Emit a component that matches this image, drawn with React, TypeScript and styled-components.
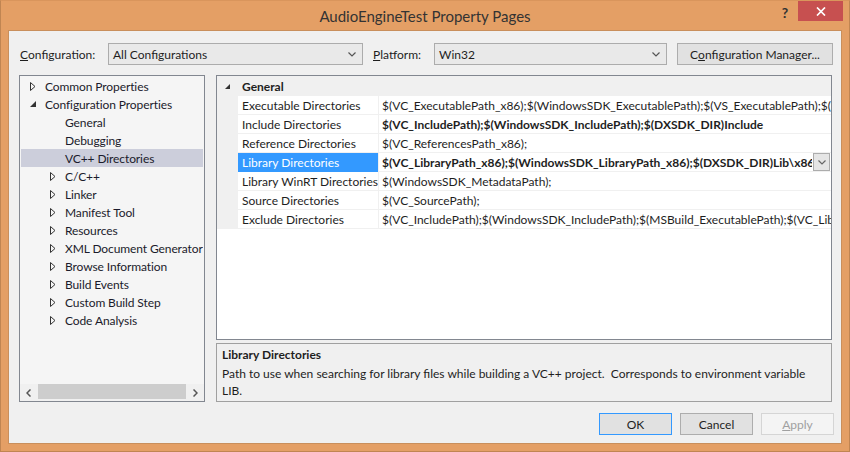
import React from "react";
import styled, { createGlobalStyle } from "styled-components";

const FONT = `"Segoe UI", Lato, "Open Sans", sans-serif`;

const Global = createGlobalStyle`
  html, body { margin: 0; padding: 0; background: #ffffff; }
  body { font-family: ${FONT}; font-size: 12px; color: #1e1e1e; }
  * { box-sizing: border-box; }
`;

const Frame = styled.div`
  width: 850px;
  height: 452px;
  background: #e49f65;
  border: 1px solid #c08552;
  border-top-color: #d9955c;
  display: flex;
  flex-direction: column;
  padding: 0 7px 7px 7px;
  overflow: hidden;
`;

const TitleBar = styled.div`
  height: 30px;
  display: grid;
  grid-template-columns: 1fr auto 1fr;
  align-items: center;
`;

const Title = styled.div`
  font-size: 15px;
  color: #333333;
  white-space: nowrap;
`;

const Caption = styled.div`
  justify-self: end;
  align-self: start;
  display: flex;
  margin-right: -1px;
`;

const HelpButton = styled.div`
  width: 26px;
  height: 23px;
  display: flex;
  align-items: center;
  justify-content: center;
  font-weight: bold;
  font-size: 14px;
  color: #333;
`;

const CloseButton = styled.div`
  width: 45px;
  height: 20px;
  background: #c75050;
  display: flex;
  align-items: center;
  justify-content: center;
`;

const Client = styled.div`
  flex: 1;
  min-width: 0;
  background: #f0f0f0;
  border: 1px solid #c98f5c;
  padding: 12px 7px 8px 10px;
  display: flex;
  flex-direction: column;
`;

const TopRow = styled.div`
  height: 22px;
  display: flex;
  align-items: stretch;
  margin-bottom: 10px;
`;

const FieldLabel = styled.div<{ $w: number; $ml?: number }>`
  width: ${(p) => p.$w}px;
  margin-left: ${(p) => p.$ml ?? 0}px;
  display: flex;
  align-items: center;
  white-space: nowrap;
  color: #1e1e1e;
`;

const Combo = styled.div<{ $w: number }>`
  width: ${(p) => p.$w}px;
  border: 1px solid #acacac;
  background: #e9e9e9;
  display: flex;
  align-items: center;
  justify-content: space-between;
  padding: 0 6px 0 4px;
  white-space: nowrap;
`;

const PushButton = styled.div<{ $w: number; $ml?: number; $variant?: "default" | "disabled" }>`
  width: ${(p) => p.$w}px;
  height: 22px;
  margin-left: ${(p) => p.$ml ?? 0}px;
  border: 1px solid
    ${(p) => (p.$variant === "default" ? "#3399ff" : p.$variant === "disabled" ? "#d5d5d5" : "#adadad")};
  background: ${(p) => (p.$variant === "disabled" ? "#f4f4f4" : "#e1e1e1")};
  color: ${(p) => (p.$variant === "disabled" ? "#a0a0a0" : "#1e1e1e")};
  display: flex;
  align-items: center;
  justify-content: center;
  white-space: nowrap;
`;

const Main = styled.div`
  height: 327px;
  display: flex;
  gap: 11px;
  margin: 0 2px 11px 0;
  min-width: 0;
`;

const Tree = styled.div`
  width: 186px;
  flex: none;
  border: 1px solid #828790;
  background: #f5f5f5;
  display: flex;
  flex-direction: column;
`;

const TreeItems = styled.div`
  flex: 1;
  padding: 1px 1px 0 1px;
  letter-spacing: -0.1px;
`;

const TreeItem = styled.div<{ $level: number; $selected?: boolean }>`
  height: 18px;
  display: flex;
  align-items: center;
  padding-left: ${(p) => (p.$level === 0 ? 9 : 29)}px;
  background: ${(p) => (p.$selected ? "#cccedb" : "transparent")};
  white-space: nowrap;
  overflow: hidden;
  color: #1b1b2b;
`;

const Expander = styled.span`
  width: 15px;
  height: 18px;
  display: flex;
  align-items: center;
  flex: none;
`;

const HScroll = styled.div`
  height: 17px;
  display: flex;
  align-items: center;
  background: #f0f0f0;
`;

const ScrollArrow = styled.div`
  width: 17px;
  height: 17px;
  display: flex;
  align-items: center;
  justify-content: center;
  flex: none;
`;

const ScrollTrack = styled.div`
  flex: 1;
  height: 17px;
  display: flex;
  align-items: flex-start;
  padding: 0 1px;
`;

const ScrollThumb = styled.div`
  width: 100%;
  height: 15px;
  background: #cdcdcd;
`;

const RightColumn = styled.div`
  flex: 1;
  min-width: 0;
  display: flex;
  flex-direction: column;
  gap: 3px;
`;

const Grid = styled.div`
  height: 265px;
  border: 1px solid #828790;
  background: #ffffff;
  overflow: hidden;
`;

const CategoryRow = styled.div`
  height: 20px;
  display: flex;
  align-items: center;
  background: #f0f0f0;
  font-weight: bold;
  color: #1e1e1e;
`;

const CategoryToggle = styled.span`
  width: 25px;
  padding-left: 8px;
  display: flex;
  align-items: center;
`;

const PropRow = styled.div`
  height: 19px;
  display: flex;
  min-width: 0;
`;

const Margin = styled.div`
  width: 21px;
  background: #f0f0f0;
  flex: none;
`;

const NameCell = styled.div<{ $selected?: boolean }>`
  width: 140px;
  flex: none;
  padding-left: 4px;
  display: flex;
  align-items: center;
  white-space: nowrap;
  overflow: hidden;
  background: ${(p) => (p.$selected ? "#3399ff" : "#ffffff")};
  color: ${(p) => (p.$selected ? "#ffffff" : "#1e1e1e")};
  border-bottom: 1px solid ${(p) => (p.$selected ? "#3399ff" : "#f0f0f0")};
`;

const Divider = styled.div`
  width: 1px;
  background: #f0f0f0;
  flex: none;
`;

const ValueCell = styled.div`
  flex: 1;
  min-width: 0;
  display: flex;
  align-items: center;
  border-bottom: 1px solid #f0f0f0;
  padding-left: 3px;
  overflow: hidden;
`;

const ValueText = styled.span<{ $bold?: boolean }>`
  flex: 1;
  min-width: 0;
  overflow: hidden;
  white-space: nowrap;
  font-weight: ${(p) => (p.$bold ? "bold" : "normal")};
  color: #1e1e1e;
`;

const DropButton = styled.div`
  width: 17px;
  height: 18px;
  margin: 0 1px 0 1px;
  align-self: flex-start;
  border: 1px solid #acacac;
  background: #e5e5e5;
  display: flex;
  align-items: center;
  justify-content: center;
  flex: none;
`;

const Description = styled.div`
  height: 59px;
  border: 1px solid #a0a0a0;
  background: #f0f0f0;
  padding: 0 5px;
`;

const DescTitle = styled.div`
  height: 21px;
  line-height: 21px;
  font-weight: bold;
  color: #1e1e1e;
`;

const DescText = styled.div`
  line-height: 17px;
  white-space: pre-wrap;
  color: #1e1e1e;
`;

const ButtonRow = styled.div`
  height: 22px;
  display: flex;
  justify-content: flex-end;
  gap: 8px;
`;

const Chevron = ({ color = "#555" }: { color?: string }) => (
  <svg width="8" height="5" viewBox="0 0 8 5">
    <path d="M0.5 0.5 L4 4 L7.5 0.5" fill="none" stroke={color} strokeWidth="1.2" />
  </svg>
);

const Collapsed = () => (
  <svg width="6" height="9" viewBox="0 0 6 9">
    <path d="M0.5 0.5 L5 4.5 L0.5 8.5 Z" fill="none" stroke="#333" strokeWidth="1" />
  </svg>
);

const Expanded = ({ size = 6 }: { size?: number }) => (
  <svg width={size} height={size} viewBox="0 0 6 6">
    <path d="M6 0 L6 6 L0 6 Z" fill="#333" />
  </svg>
);

const ArrowLeft = () => (
  <svg width="5" height="8" viewBox="0 0 5 8">
    <path d="M4.5 0.5 L1 4 L4.5 7.5" fill="none" stroke="#555" strokeWidth="1.5" />
  </svg>
);
const ArrowRight = () => (
  <svg width="5" height="8" viewBox="0 0 5 8">
    <path d="M0.5 0.5 L4 4 L0.5 7.5" fill="none" stroke="#555" strokeWidth="1.5" />
  </svg>
);

type Node = { label: string; level: number; state: "open" | "closed" | "leaf"; selected?: boolean };
const treeNodes: Node[] = [
  { label: "Common Properties", level: 0, state: "closed" },
  { label: "Configuration Properties", level: 0, state: "open" },
  { label: "General", level: 1, state: "leaf" },
  { label: "Debugging", level: 1, state: "leaf" },
  { label: "VC++ Directories", level: 1, state: "leaf", selected: true },
  { label: "C/C++", level: 1, state: "closed" },
  { label: "Linker", level: 1, state: "closed" },
  { label: "Manifest Tool", level: 1, state: "closed" },
  { label: "Resources", level: 1, state: "closed" },
  { label: "XML Document Generator", level: 1, state: "closed" },
  { label: "Browse Information", level: 1, state: "closed" },
  { label: "Build Events", level: 1, state: "closed" },
  { label: "Custom Build Step", level: 1, state: "closed" },
  { label: "Code Analysis", level: 1, state: "closed" },
];

type Prop = { name: string; value: string; bold?: boolean; selected?: boolean };
const props: Prop[] = [
  {
    name: "Executable Directories",
    value:
      "$(VC_ExecutablePath_x86);$(WindowsSDK_ExecutablePath);$(VS_ExecutablePath);$(MSBuild_ExecutablePath);$(SystemRoot)\\SysWow64;$(FxCopDir);$(PATH);",
  },
  { name: "Include Directories", value: "$(VC_IncludePath);$(WindowsSDK_IncludePath);$(DXSDK_DIR)Include", bold: true },
  { name: "Reference Directories", value: "$(VC_ReferencesPath_x86);" },
  {
    name: "Library Directories",
    value: "$(VC_LibraryPath_x86);$(WindowsSDK_LibraryPath_x86);$(DXSDK_DIR)Lib\\x86",
    bold: true,
    selected: true,
  },
  { name: "Library WinRT Directories", value: "$(WindowsSDK_MetadataPath);" },
  { name: "Source Directories", value: "$(VC_SourcePath);" },
  {
    name: "Exclude Directories",
    value: "$(VC_IncludePath);$(WindowsSDK_IncludePath);$(MSBuild_ExecutablePath);$(VC_LibraryPath_x86);",
  },
];

export default function App() {
  return (
    <>
      <Global />
      <Frame>
        <TitleBar>
          <span />
          <Title>AudioEngineTest Property Pages</Title>
          <Caption>
            <HelpButton>?</HelpButton>
            <CloseButton>
              <svg width="10" height="9" viewBox="0 0 10 9">
                <path d="M1 0.5 L9 8.5 M9 0.5 L1 8.5" stroke="#ffffff" strokeWidth="1.7" />
              </svg>
            </CloseButton>
          </Caption>
        </TitleBar>
        <Client>
          <TopRow>
            <FieldLabel $w={88} $ml={1}>
              <u>C</u>onfiguration:
            </FieldLabel>
            <Combo $w={255}>
              <span>All Configurations</span>
              <Chevron />
            </Combo>
            <FieldLabel $w={61} $ml={10}>
              <u>P</u>latform:
            </FieldLabel>
            <Combo $w={233}>
              <span>Win32</span>
              <Chevron />
            </Combo>
            <PushButton $w={156} $ml={10}>
              C<u>o</u>nfiguration Manager...
            </PushButton>
          </TopRow>
          <Main>
            <Tree>
              <TreeItems>
                {treeNodes.map((n) => (
                  <TreeItem key={n.label} $level={n.level} $selected={n.selected}>
                    <Expander>
                      {n.state === "closed" ? <Collapsed /> : n.state === "open" ? <Expanded /> : null}
                    </Expander>
                    {n.label}
                  </TreeItem>
                ))}
              </TreeItems>
              <HScroll>
                <ScrollArrow>
                  <ArrowLeft />
                </ScrollArrow>
                <ScrollTrack>
                  <ScrollThumb />
                </ScrollTrack>
                <ScrollArrow>
                  <ArrowRight />
                </ScrollArrow>
              </HScroll>
            </Tree>
            <RightColumn>
              <Grid>
                <CategoryRow>
                  <CategoryToggle>
                    <Expanded size={5} />
                  </CategoryToggle>
                  General
                </CategoryRow>
                {props.map((p) => (
                  <PropRow key={p.name}>
                    <Margin />
                    <NameCell $selected={p.selected}>{p.name}</NameCell>
                    <Divider />
                    <ValueCell>
                      <ValueText $bold={p.bold}>{p.value}</ValueText>
                      {p.selected && (
                        <DropButton>
                          <Chevron color="#666" />
                        </DropButton>
                      )}
                    </ValueCell>
                  </PropRow>
                ))}
              </Grid>
              <Description>
                <DescTitle>Library Directories</DescTitle>
                <DescText>
                  {"Path to use when searching for library files while building a VC++ project.  Corresponds to environment variable"}
                  <br />
                  LIB.
                </DescText>
              </Description>
            </RightColumn>
          </Main>
          <ButtonRow>
            <PushButton $w={73} $variant="default">
              OK
            </PushButton>
            <PushButton $w={73}>Cancel</PushButton>
            <PushButton $w={73} $variant="disabled">
              <u>A</u>pply
            </PushButton>
          </ButtonRow>
        </Client>
      </Frame>
    </>
  );
}
